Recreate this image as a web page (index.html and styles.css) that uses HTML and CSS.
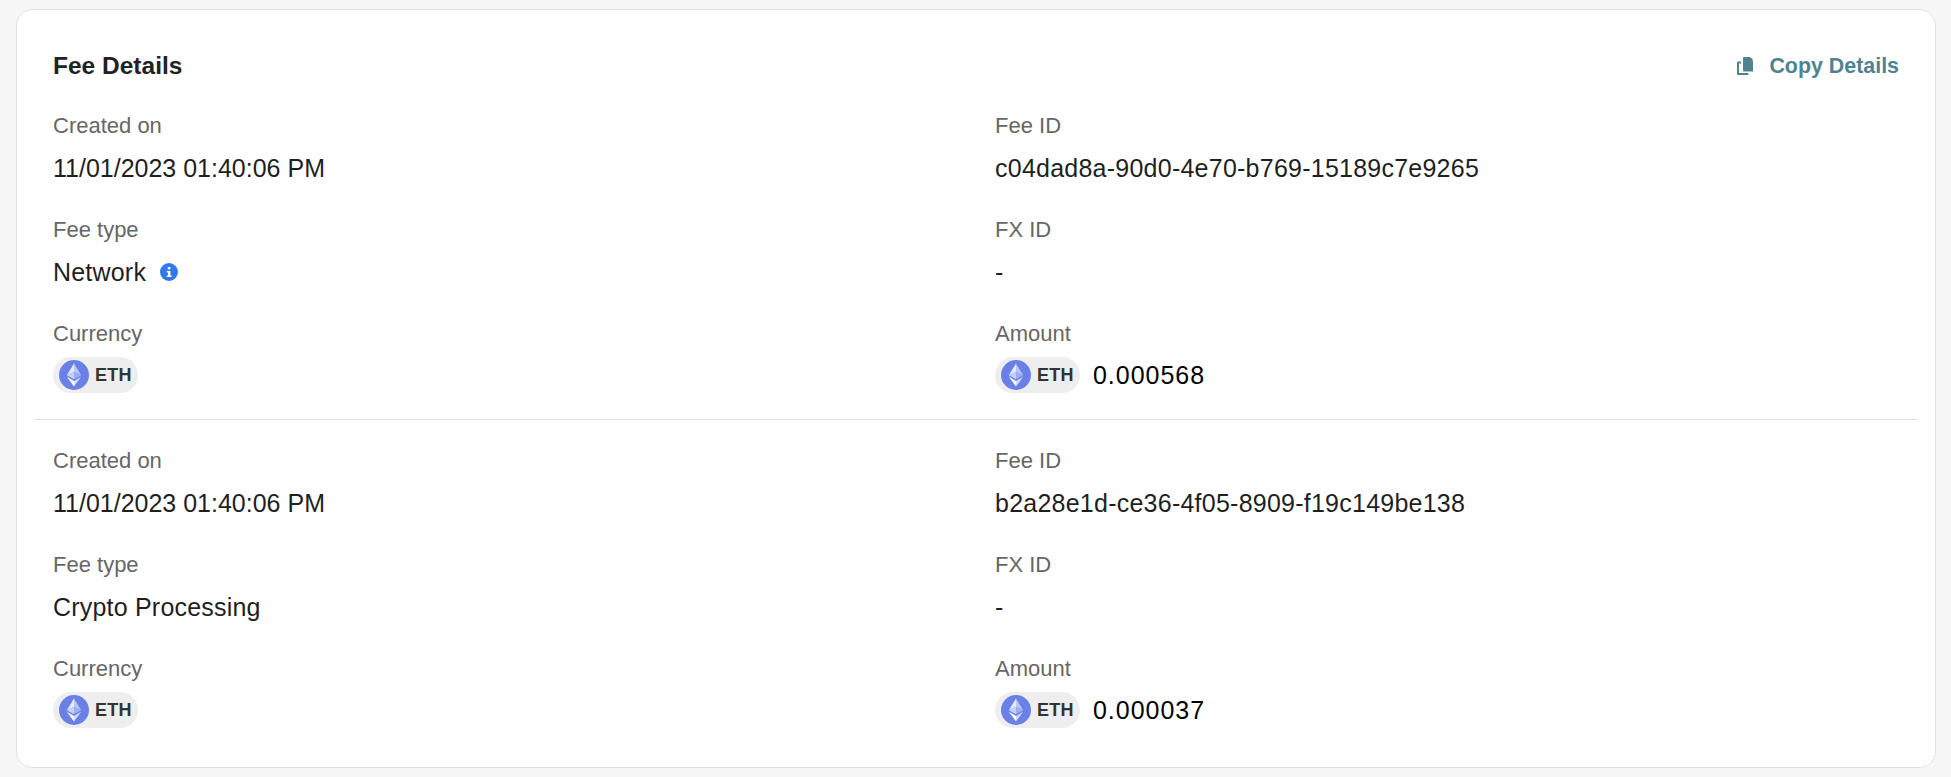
FILE: index.html
```html
<!DOCTYPE html>
<html lang="en">
<head>
<meta charset="utf-8">
<title>Fee Details</title>
<link rel="stylesheet" href="styles.css">
</head>
<body>
<svg class="defs" width="0" height="0" aria-hidden="true">
  <symbol id="eth" viewBox="0 0 30 30">
    <circle cx="15" cy="15" r="15" fill="#6a80e6"/>
    <path d="M15 3.500 7.800 15.200 15 11.900z" fill="#e3e8fb"/>
    <path d="M15 3.500 22.200 15.200 15 11.900z" fill="#b9c5f4"/>
    <path d="M7.800 15.200 15 11.900V19.300z" fill="#c5cff7"/>
    <path d="M22.200 15.200 15 11.900V19.300z" fill="#9dadf0"/>
    <path d="M7.800 16.700 15 20.900V26.500z" fill="#fff"/>
    <path d="M22.200 16.700 15 20.900V26.500z" fill="#d5dcfa"/>
  </symbol>
</svg>
<main class="card">
  <header class="card-head">
    <h2 class="title">Fee Details</h2>
    <button class="copy" type="button">
      <svg class="copy-icon" viewBox="0 0 16 18" aria-hidden="true"><path d="M7 0h4.500A4.500 4.500 0 0 1 16 4.500V14.500H7a1 1 0 0 1-1-1V1a1 1 0 0 1 1-1z" fill="#4f838f"/><path d="M4 4.500H1a1 1 0 0 0-1 1V17a1 1 0 0 0 1 1h9.500a1 1 0 0 0 1-1V16H2V6.500H4z" fill="#4f838f"/></svg>
      <span>Copy Details</span>
    </button>
  </header>

  <section class="fee">
    <div class="field"><div class="label">Created on</div><div class="value">11/01/2023 01:40:06 PM</div></div>
    <div class="field"><div class="label">Fee ID</div><div class="value value-id">c04dad8a-90d0-4e70-b769-15189c7e9265</div></div>
    <div class="field"><div class="label">Fee type</div><div class="value value-text">Network <svg class="info" viewBox="0 0 18 18" aria-hidden="true"><circle cx="9" cy="9" r="9" fill="#3478f0"/><rect x="7.800" y="4" width="2.600" height="2.400" fill="#fff"/><path d="M6.800 8h3.600v4.400h1.200v1.600H6.800v-1.600h1.200V9.600H6.800z" fill="#fff"/></svg></div></div>
    <div class="field"><div class="label">FX ID</div><div class="value">-</div></div>
    <div class="field"><div class="label">Currency</div><div class="money"><span class="pill"><svg class="coin"><use href="#eth"/></svg>ETH</span></div></div>
    <div class="field"><div class="label">Amount</div><div class="money"><span class="pill"><svg class="coin"><use href="#eth"/></svg>ETH</span><span class="amount">0.000568</span></div></div>
  </section>

  <section class="fee fee-next">
    <div class="field"><div class="label">Created on</div><div class="value">11/01/2023 01:40:06 PM</div></div>
    <div class="field"><div class="label">Fee ID</div><div class="value value-id">b2a28e1d-ce36-4f05-8909-f19c149be138</div></div>
    <div class="field"><div class="label">Fee type</div><div class="value value-text">Crypto Processing</div></div>
    <div class="field"><div class="label">FX ID</div><div class="value">-</div></div>
    <div class="field"><div class="label">Currency</div><div class="money"><span class="pill"><svg class="coin"><use href="#eth"/></svg>ETH</span></div></div>
    <div class="field"><div class="label">Amount</div><div class="money"><span class="pill"><svg class="coin"><use href="#eth"/></svg>ETH</span><span class="amount">0.000037</span></div></div>
  </section>
</main>
</body>
</html>
```
FILE: styles.css
```css
* { box-sizing: border-box; }
html, body { height: 100%; }
body {
  margin: 0;
  padding: 9px 15px 0 16px;
  background: #f7f7f7;
  font-family: "Liberation Sans", Arial, sans-serif;
  color: #1f1f1f;
  overflow: hidden;
}
.defs { position: absolute; }
.card {
  height: 759px;
  background: #fff;
  border: 1.500px solid #e1e1e1;
  border-radius: 16px;
  padding: 0 18px;
}
.card-head {
  display: flex;
  justify-content: space-between;
  align-items: center;
  padding: 40px 18px 30px;
}
.title { margin: 0; font-size: 24.500px; line-height: 32px; font-weight: 700; color: #222; }
.copy {
  display: flex;
  align-items: center;
  gap: 16px;
  padding: 0;
  border: 0;
  background: none;
  font: 700 21.400px/32px "Liberation Sans", Arial, sans-serif;
  color: #4f838f;
}
.copy-icon { width: 16px; height: 18px; }
.fee {
  display: grid;
  grid-template-columns: 1fr 1fr;
  grid-template-rows: 103.500px 104.500px auto;
  column-gap: 2px;
  padding-bottom: 26px;
}
.fee-next { border-top: 1.500px solid #e1e1e1; padding-top: 27px; }
.field { padding-left: 18px; }
.label { font-size: 22px; line-height: 28px; color: #666; }
.value {
  display: flex;
  align-items: center;
  gap: 13px;
  margin-top: 13px;
  font-size: 25px;
  line-height: 30px;
  color: #1f1f1f;
}
.value-id { letter-spacing: 0.240px; }
.value-text { letter-spacing: 0.200px; gap: 14px; }
.info { width: 18px; height: 18px; }
.money { display: flex; align-items: center; gap: 13px; margin-top: 9px; }
.pill {
  display: inline-flex;
  align-items: center;
  gap: 6px;
  height: 36px;
  padding: 0 6px 0 6px;
  border-radius: 18px;
  background: #eeeeee;
  font-size: 18px;
  letter-spacing: 0.300px;
  font-weight: 700;
  color: #333;
}
.coin { width: 30px; height: 30px; }
.amount { font-size: 25px; letter-spacing: 1px; color: #000; }
```
